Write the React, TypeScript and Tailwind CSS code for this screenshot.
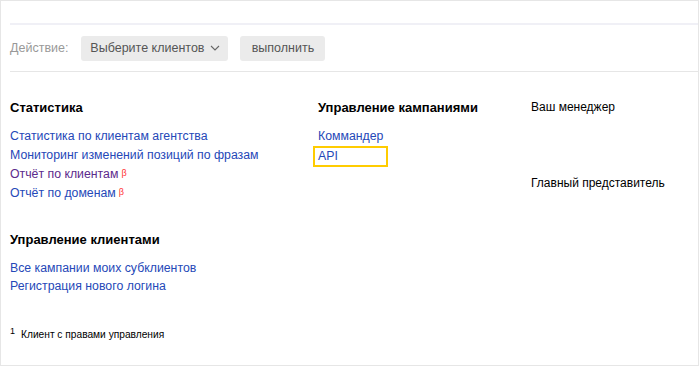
import React from 'react';

const linkCls = 'text-[#2548b8] hover:text-[#c00]';

const Beta = () => <sup className="text-[9px] text-[#f33] ml-[3px] relative -top-[2px]">β</sup>;

const App: React.FC = () => {
  return (
    <div className="w-[699px] h-[366px] border border-[#e6e6e6] bg-white text-[12.3px] text-black font-['Liberation_Sans',Arial,sans-serif] overflow-hidden">
      <div className="h-[22px]" />
      <div className="ml-[9px] h-[2px] bg-[#f0f0f6]" />
      <div className="ml-[9px] h-[46px] flex items-center text-[12.5px]">
        <span className="text-[#999]">Действие:</span>
        <button className="ml-[13px] h-[25px] w-[147px] rounded-[3px] bg-[#ebebeb] text-[#555] flex items-center justify-center gap-[5px]">
          Выберите клиентов
          <svg width="10" height="6" viewBox="0 0 10 6" fill="none">
            <path d="M1 1l4 4 4-4" stroke="#666" strokeWidth="1.1" />
          </svg>
        </button>
        <button className="ml-[12px] h-[25px] w-[85px] rounded-[3px] bg-[#ebebeb] text-[#555]">выполнить</button>
      </div>
      <div className="ml-[9px] h-px bg-[#e6e6e6]" />

      <div className="pl-[9px] pt-[26px] flex">
        <div className="w-[308px] mt-px">
          <h2 className="font-bold text-[13px] leading-[18px]">Статистика</h2>
          <ul className="mt-[10px] leading-[19px]">
            <li><a href="#" className={linkCls}>Статистика по клиентам агентства</a></li>
            <li><a href="#" className={linkCls}>Мониторинг изменений позиций по фразам</a></li>
            <li><a href="#" className="text-[#5c2a8c]">Отчёт по клиентам</a><Beta /></li>
            <li><a href="#" className={linkCls}>Отчёт по доменам</a><Beta /></li>
          </ul>

          <h2 className="mt-[28px] font-bold text-[13px] leading-[18px]">Управление клиентами</h2>
          <ul className="mt-[10px] leading-[18px]">
            <li><a href="#" className={linkCls}>Все кампании моих субклиентов</a></li>
            <li><a href="#" className={linkCls}>Регистрация нового логина</a></li>
          </ul>

          <p className="mt-[33px] text-[10.2px] leading-[14px] flex items-start text-black">
            <sup className="text-[9px] text-black relative top-[3px] mr-[6px]">1</sup>
            Клиент с правами управления
          </p>
        </div>

        <div className="w-[213px] mt-px">
          <h2 className="font-bold text-[13px] leading-[18px]">Управление кампаниями</h2>
          <ul className="mt-[10px] leading-[19px]">
            <li><a href="#" className={linkCls}>Коммандер</a></li>
            <li>
              <span className="inline-block -ml-[5px] w-[75px] h-[21px] border-2 border-[#ffcc00] pl-[3px] leading-[17px]">
                <a href="#" className={linkCls}>API</a>
              </span>
            </li>
          </ul>
        </div>

        <div className="flex-1 text-[12px]">
          <div className="leading-[18px]">Ваш менеджер</div>
          <div className="mt-[58px] leading-[18px]">Главный представитель</div>
        </div>
      </div>
    </div>
  );
};

export default App;
